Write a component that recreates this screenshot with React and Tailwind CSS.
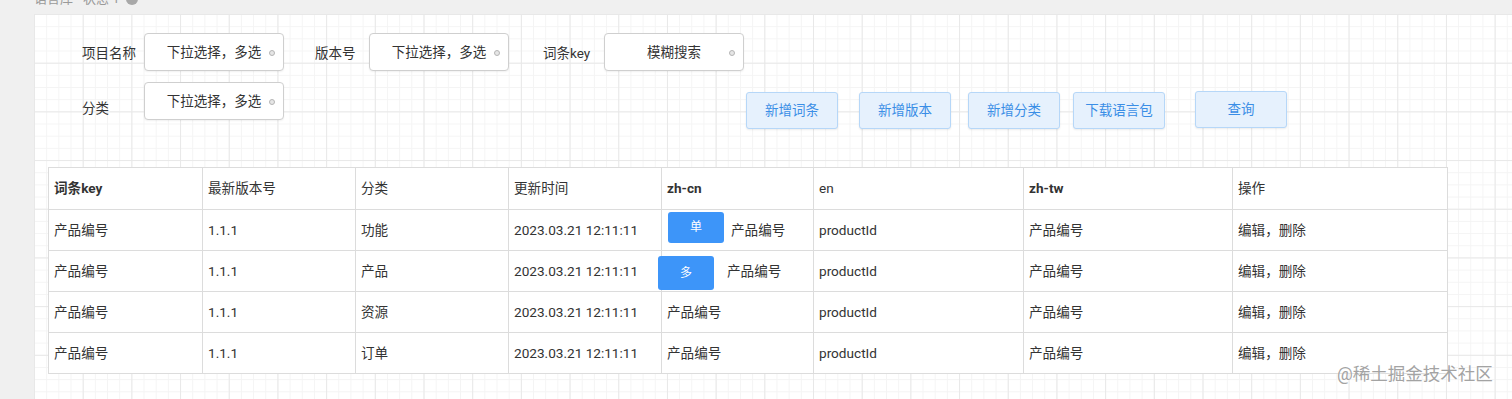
import React from 'react';

const rows = [
  { key: '产品编号', ver: '1.1.1', cat: '功能', time: '2023.03.21 12:11:11', tag: '单', en: 'productId', tw: '产品编号' },
  { key: '产品编号', ver: '1.1.1', cat: '产品', time: '2023.03.21 12:11:11', tag: '多', en: 'productId', tw: '产品编号' },
  { key: '产品编号', ver: '1.1.1', cat: '资源', time: '2023.03.21 12:11:11', en: 'productId', tw: '产品编号' },
  { key: '产品编号', ver: '1.1.1', cat: '订单', time: '2023.03.21 12:11:11', en: 'productId', tw: '产品编号' },
];

const SelectBox = ({ text }) => (
  <div className="relative w-[140px] h-[38px] bg-white border border-[#cfcfcf] rounded-[4px] shadow-[0_1px_2px_rgba(0,0,0,0.06)] flex items-center justify-center text-[13.5px] text-[#333]">
    {text}
    <span className="absolute right-[8px] top-[16px] w-[6px] h-[6px] rounded-full border border-[#b5b5b5] bg-[#e6e6e6]"></span>
  </div>
);

const ActionButton = ({ children, className = '' }) => (
  <button className={`h-[37px] w-[92px] bg-[#e6f1fd] border border-[#b6d7f8] rounded-[3px] shadow-[0_1px_2px_rgba(0,0,0,0.08)] text-[13.5px] text-[#3a8ee6] ${className}`}>
    {children}
  </button>
);

const Tag = ({ children, className = '' }) => (
  <span className={`flex items-center justify-center w-[56px] bg-[#3d95f9] rounded-[3px] text-white text-[12px] ${className}`}>
    {children}
  </span>
);

export default function App() {
  const cell = 'border border-[#dcdcdc] pl-[5px] text-left align-middle';
  return (
    <div
      className="flex flex-col w-[1512px] h-[399px] overflow-hidden bg-[#f0f0f0] text-[#333]"
      style={{ fontFamily: 'Roboto, "Noto Sans CJK SC", sans-serif' }}
    >
      <div className="h-[14px] pl-[34px] overflow-hidden flex items-start">
        <div className="flex items-center gap-[6px] -mt-[8px] text-[13px] leading-[13px] text-[#9a9a9a]">
          <span>语言库 - 状态 1</span>
          <span className="w-[12px] h-[12px] rounded-full bg-[#a8a8a8]"></span>
        </div>
      </div>
      <div className="flex flex-1 pl-[34px]">
        <div className="relative flex-1 flex flex-col bg-white bg-[linear-gradient(to_right,#e8e8e8_1px,transparent_1px),linear-gradient(to_bottom,#e8e8e8_1px,transparent_1px),linear-gradient(to_right,#f4f4f4_1px,transparent_1px),linear-gradient(to_bottom,#f4f4f4_1px,transparent_1px)] bg-[size:48.7px_48.7px,48.7px_48.7px,12.175px_12.175px,12.175px_12.175px]">
          <div className="flex flex-col pl-[48px] pt-[19px] gap-[11px] text-[13.5px]">
            <div className="flex items-center">
              <span className="w-[62px] pt-[2px]">项目名称</span>
              <SelectBox text="下拉选择，多选" />
              <span className="ml-[31px] w-[54px] pt-[2px]">版本号</span>
              <SelectBox text="下拉选择，多选" />
              <span className="ml-[34px] w-[61px] pt-[2px]">词条key</span>
              <SelectBox text="模糊搜索" />
            </div>
            <div className="flex items-start">
              <span className="w-[62px] pt-[16px]">分类</span>
              <SelectBox text="下拉选择，多选" />
              <div className="flex items-start mt-[10px] ml-[462px]">
                <ActionButton>新增词条</ActionButton>
                <ActionButton className="ml-[21px] w-[91px]">新增版本</ActionButton>
                <ActionButton className="ml-[17px]">新增分类</ActionButton>
                <ActionButton className="ml-[13px]">下载语言包</ActionButton>
                <ActionButton className="ml-[30px] w-[91px] -mt-[1px]">查询</ActionButton>
              </div>
            </div>
          </div>

          <table className="mt-[38px] ml-[14px] w-[1399px] table-fixed border-collapse bg-white text-[13.6px] text-[#333]">
            <colgroup>
              <col className="w-[154px]" />
              <col className="w-[153px]" />
              <col className="w-[153px]" />
              <col className="w-[153px]" />
              <col className="w-[152px]" />
              <col className="w-[210px]" />
              <col className="w-[209px]" />
              <col className="w-[215px]" />
            </colgroup>
            <thead>
              <tr className="h-[42px]">
                <th className={`${cell} font-bold`}>词条key</th>
                <th className={`${cell} font-normal`}>最新版本号</th>
                <th className={`${cell} font-normal`}>分类</th>
                <th className={`${cell} font-normal`}>更新时间</th>
                <th className={`${cell} font-bold`}>zh-cn</th>
                <th className={`${cell} font-normal`}>en</th>
                <th className={`${cell} font-bold`}>zh-tw</th>
                <th className={`${cell} font-normal`}>操作</th>
              </tr>
            </thead>
            <tbody>
              {rows.map((r, i) => (
                <tr key={i} className="h-[41px]">
                  <td className={cell}>{r.key}</td>
                  <td className={cell}>{r.ver}</td>
                  <td className={cell}>{r.cat}</td>
                  <td className={cell}>{r.time}</td>
                  <td className={cell}>
                    {r.tag === '单' && (
                      <div className="flex items-center">
                        <Tag className="ml-[1px] h-[31px] -mt-[6px]">单</Tag>
                        <span className="ml-[7px]">产品编号</span>
                      </div>
                    )}
                    {r.tag === '多' && (
                      <div className="flex items-center">
                        <Tag className="-ml-[9px] h-[34px] mt-[4px]">多</Tag>
                        <span className="ml-[13px]">产品编号</span>
                      </div>
                    )}
                    {!r.tag && '产品编号'}
                  </td>
                  <td className={cell}>{r.en}</td>
                  <td className={cell}>{r.tw}</td>
                  <td className={cell}>编辑，删除</td>
                </tr>
              ))}
            </tbody>
          </table>

          <div className="absolute left-[1303px] top-[347px] text-[17.5px] text-[#a3a3a3] [text-shadow:0_0_2px_#fff]">
            @稀土掘金技术社区
          </div>
        </div>
      </div>
    </div>
  );
}
